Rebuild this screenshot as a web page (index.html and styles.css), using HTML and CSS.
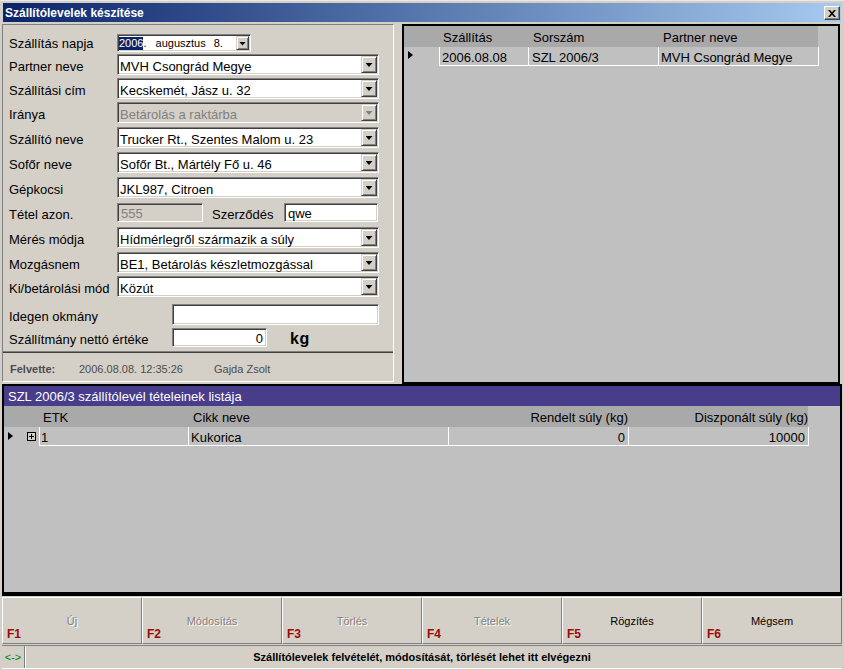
FILE: index.html
```html
<!DOCTYPE html>
<html>
<head>
<meta charset="utf-8">
<title>Szállítólevelek készítése</title>
<link rel="stylesheet" href="styles.css">
</head>
<body>
<div class="win">
  <div class="title">
    <span class="title-text">Szállítólevelek készítése</span>
    <div class="close"><svg width="8" height="7" viewBox="0 0 8 7"><path d="M0 0h2l2 2.2L6 0h2L5 3.5 8 7H6L4 4.8 2 7H0l3-3.5z" fill="#000"/></svg></div>
  </div>

  <div class="main">
    <div class="left">
      <div class="row mt9 h18">
        <div class="lbl first">Szállítás napja</div>
        <div class="datebox">
          <div class="dtext"><span class="dsel">2006</span><span>.</span><span class="dmonth">augusztus</span><span class="dday">8.</span></div>
          <div class="dbtn"><span class="arrow"></span></div>
        </div>
      </div>
      <div class="row mt2">
        <div class="lbl">Partner neve</div>
        <div class="combo"><div class="ctext">MVH Csongrád Megye</div><div class="cbtn"><span class="arrow"></span></div></div>
      </div>
      <div class="row mt3">
        <div class="lbl">Szállítási cím</div>
        <div class="combo"><div class="ctext">Kecskemét, Jász u. 32</div><div class="cbtn"><span class="arrow"></span></div></div>
      </div>
      <div class="row mt3">
        <div class="lbl">Iránya</div>
        <div class="combo disabled"><div class="ctext">Betárolás a raktárba</div><div class="cbtn"><span class="arrow"></span></div></div>
      </div>
      <div class="row mt4">
        <div class="lbl">Szállító neve</div>
        <div class="combo"><div class="ctext">Trucker Rt., Szentes Malom u. 23</div><div class="cbtn"><span class="arrow"></span></div></div>
      </div>
      <div class="row mt4">
        <div class="lbl">Sofőr neve</div>
        <div class="combo"><div class="ctext">Sofőr Bt., Mártély Fő u. 46</div><div class="cbtn"><span class="arrow"></span></div></div>
      </div>
      <div class="row mt4">
        <div class="lbl">Gépkocsi</div>
        <div class="combo"><div class="ctext">JKL987, Citroen</div><div class="cbtn"><span class="arrow"></span></div></div>
      </div>
      <div class="row mt5 h19">
        <div class="lbl">Tétel azon.</div>
        <div class="edit disabled w86">555</div>
        <div class="lbl2">Szerződés</div>
        <div class="edit w94">qwe</div>
      </div>
      <div class="row mt5">
        <div class="lbl">Mérés módja</div>
        <div class="combo"><div class="ctext">Hídmérlegről származik a súly</div><div class="cbtn"><span class="arrow"></span></div></div>
      </div>
      <div class="row mt4">
        <div class="lbl">Mozgásnem</div>
        <div class="combo"><div class="ctext">BE1, Betárolás készletmozgással</div><div class="cbtn"><span class="arrow"></span></div></div>
      </div>
      <div class="row mt3">
        <div class="lbl">Ki/betárolási mód</div>
        <div class="combo"><div class="ctext">Közút</div><div class="cbtn"><span class="arrow"></span></div></div>
      </div>
      <div class="row mt7">
        <div class="lbl wide">Idegen okmány</div>
        <div class="edit w207"></div>
      </div>
      <div class="row mt3 h19">
        <div class="lbl wide">Szállítmány nettó értéke</div>
        <div class="edit w95 num">0</div>
        <div class="unit">kg</div>
      </div>
      <div class="sep"></div>
      <div class="felv">
        <span class="fl">Felvette:</span>
        <span class="fd">2006.08.08. 12:35:26</span>
        <span class="fu">Gajda Zsolt</span>
      </div>
    </div>

    <div class="right">
      <div class="ghead">
        <div class="gi"></div>
        <div class="hc r1">Szállítás</div>
        <div class="hc r2">Sorszám</div>
        <div class="hc r3">Partner neve</div>
      </div>
      <div class="grow">
        <div class="gi"><span class="tri"></span></div>
        <div class="dc r1">2006.08.08</div>
        <div class="dc r2">SZL 2006/3</div>
        <div class="dc r3 last">MVH Csongrád Megye</div>
      </div>
    </div>
  </div>

  <div class="lower">
    <div class="caption">SZL 2006/3 szállítólevél tételeinek listája</div>
    <div class="ghead lh">
      <div class="gi"></div>
      <div class="hc l1">ETK</div>
      <div class="hc l2">Cikk neve</div>
      <div class="hc l3 ra">Rendelt súly (kg)</div>
      <div class="hc l4 ra">Diszponált súly (kg)</div>
    </div>
    <div class="grow">
      <div class="gi"><span class="tri tri2"></span><span class="plus"></span></div>
      <div class="dc l1 p2">1</div>
      <div class="dc l2 p3">Kukorica</div>
      <div class="dc l3 ra">0</div>
      <div class="dc l4 ra last">10000</div>
    </div>
  </div>

  <div class="buttons">
    <div class="btn off"><div class="bt">Új</div><div class="fk">F1</div></div>
    <div class="btn off"><div class="bt">Módosítás</div><div class="fk">F2</div></div>
    <div class="btn off"><div class="bt">Törlés</div><div class="fk">F3</div></div>
    <div class="btn off"><div class="bt">Tételek</div><div class="fk">F4</div></div>
    <div class="btn"><div class="bt">Rögzítés</div><div class="fk">F5</div></div>
    <div class="btn"><div class="bt">Mégsem</div><div class="fk">F6</div></div>
  </div>

  <div class="status">
    <div class="sico">&lt;-&gt;</div>
    <div class="stxt">Szállítólevelek felvételét, módosítását, törlését lehet itt elvégezni</div>
  </div>
</div>
</body>
</html>
```

FILE: styles.css
```css
* { box-sizing: border-box; }
html, body { margin: 0; padding: 0; }
body {
  width: 844px;
  height: 670px;
  overflow: hidden;
  background: #d4d0c8;
  font-family: "Liberation Sans", Arial, sans-serif;
  font-size: 13px;
  color: #000;
}
.win {
  width: 844px;
  height: 670px;
  padding-top: 3px;
  display: flex;
  flex-direction: column;
  border-top: 1px solid #ece9e2;
}

/* title bar */
.title {
  margin: -1px 3px 0 3px;
  height: 19px;
  background: linear-gradient(to right, #0a246a, #a6caf0);
  display: flex;
  align-items: center;
  justify-content: space-between;
  padding-left: 2px;
  padding-right: 1px;
  color: #fff;
  font-weight: bold;
  font-size: 12px;
}
.close {
  width: 16px;
  height: 14px;
  margin-top: 1px;
  background: #d4d0c8;
  border: 1px solid;
  border-color: #fff #404040 #404040 #fff;
  box-shadow: inset -1px -1px #808080;
  display: flex;
  align-items: center;
  justify-content: center;
}

/* main area */
.main {
  display: flex;
  margin-top: 2px;
  height: 360px;
}
.left {
  margin-left: 2px;
  width: 392px;
  height: 358px;
  border: 1px solid;
  border-color: #808080 #fff #fff #808080;
  display: flex;
  flex-direction: column;
}
.row {
  display: flex;
  align-items: center;
  height: 21px;
  flex: none;
}
.h18 { height: 18px; }
.h19 { height: 19px; }
.mt2 { margin-top: 2px; }
.mt3 { margin-top: 3px; }
.mt4 { margin-top: 4px; }
.mt5 { margin-top: 5px; }
.mt7 { margin-top: 7px; }
.mt9 { margin-top: 9px; }

.lbl {
  width: 114px;
  padding-left: 6px;
  padding-top: 4px;
  white-space: nowrap;
  flex: none;
}
.lbl.first { padding-top: 0; }
.lbl.wide { width: 169px; }
.lbl2 {
  margin-left: 9px;
  width: 72px;
  padding-top: 3px;
  white-space: nowrap;
}
.unit {
  margin-left: 23px;
  padding-top: 2px;
  font-weight: bold;
  font-size: 16px;
  letter-spacing: 0.5px;
}

/* sunken boxes */
.combo, .edit, .datebox {
  height: 100%;
  border: 1px solid;
  border-color: #808080 #fff #fff #808080;
  box-shadow: inset 1px 1px #404040, inset -1px -1px #d4d0c8;
  padding: 1px;
  background: #fff;
  flex: none;
}
.combo {
  width: 262px;
  display: flex;
}
.ctext {
  flex: 1;
  padding-left: 1px;
  padding-top: 2px;
  line-height: 17px;
  white-space: nowrap;
}
.cbtn, .dbtn {
  width: 16px;
  height: 100%;
  background: #d4d0c8;
  border: 1px solid;
  border-color: #d4d0c8 #404040 #404040 #d4d0c8;
  box-shadow: inset 1px 1px #fff, inset -1px -1px #808080;
  display: flex;
  align-items: center;
  justify-content: center;
}
.arrow {
  display: block;
  width: 7px;
  height: 4px;
  background: #000;
  clip-path: polygon(0 0, 7px 0, 3.5px 4px);
  margin-top: 1px;
}
.combo.disabled { background: #d4d0c8; }
.combo.disabled .ctext { color: #808080; }
.combo.disabled .arrow { background: #808080; }

.edit {
  padding: 2px 3px 0;
  line-height: 15px;
}
.edit.disabled { background: #d4d0c8; color: #808080; }
.w86 { width: 86px; }
.w94 { width: 94px; }
.w207 { width: 207px; }
.w95 { width: 95px; }
.num { text-align: right; }

.datebox {
  width: 134px;
  display: flex;
  font-size: 11px;
}
.dtext {
  flex: 1;
  display: flex;
  align-items: center;
  white-space: nowrap;
}
.dsel {
  background: #0a246a;
  color: #fff;
  line-height: 13px;
}
.dmonth { margin-left: 9px; }
.dday { margin-left: 8px; }
.dbtn { width: 13px; }

.sep {
  margin-top: 4px;
  height: 2px;
  border-top: 1px solid #808080;
  border-bottom: 1px solid #404040;
  flex: none;
}
.felv {
  flex: 1;
  display: flex;
  align-items: center;
  font-size: 11px;
  color: #4c4c4c;
  padding-top: 3px;
}
.fl { margin-left: 7px; font-weight: bold; width: 69px; }
.fd { width: 135px; }

/* right grid */
.right {
  margin-left: 8px;
  width: 438px;
  height: 360px;
  border: 2px solid #000;
  background: #c0c0c0;
}
.ghead {
  display: flex;
  height: 21px;
  background: #a9a9a9;
  width: 414px;
  align-items: center;
}
.grow {
  display: flex;
  height: 19px;
}
.gi {
  width: 35px;
  flex: none;
  position: relative;
  height: 100%;
}
.hc {
  padding-left: 4px;
  padding-top: 2px;
  white-space: nowrap;
  flex: none;
}
.dc {
  flex: none;
  height: 19px;
  border-left: 1px solid #fff;
  border-bottom: 1px solid #fff;
  padding-left: 2px;
  padding-top: 3px;
  line-height: 15px;
  white-space: nowrap;
}
.dc.last { border-right: 1px solid #fff; }
.r1 { width: 89px; }
.r2 { width: 130px; }
.r3 { width: 160px; }
.hc.r2 { padding-left: 5px; }
.hc.r3 { padding-left: 5px; }
.dc.r2 { padding-left: 3px; }
.dc.r3 { width: 161px; }
.tri {
  position: absolute;
  left: 4px;
  top: 4px;
  width: 0;
  height: 0;
  border-left: 5px solid #000;
  border-top: 4.5px solid transparent;
  border-bottom: 4.5px solid transparent;
}

/* lower panel */
.lower {
  margin: 0 2px;
  height: 212px;
  border: 2px solid #000;
  border-bottom-width: 4px;
  background: #c0c0c0;
  flex: none;
}
.caption {
  height: 20px;
  background: #483d8b;
  color: #fff;
  padding-left: 4px;
  padding-top: 2px;
  line-height: 18px;
  white-space: nowrap;
}
.ghead.lh { width: 804px; }
.l1 { width: 149px; }
.l2 { width: 260px; }
.l3 { width: 180px; }
.l4 { width: 180px; }
.hc.l2 { padding-left: 5px; }
.ra { text-align: right; padding-left: 0; }
.hc.ra { padding-right: 0; padding-left: 0; }
.dc.ra { padding-right: 3px; }
.dc.l4 { width: 181px; }
.p2 { padding-left: 1px; }
.p3 { padding-left: 2px; }
.tri2 { left: 4px; top: 5px; }
.plus {
  position: absolute;
  left: 23px;
  top: 5px;
  width: 9px;
  height: 9px;
  border: 1px solid #000;
  background:
    linear-gradient(#000, #000) center / 5px 1px no-repeat,
    linear-gradient(#000, #000) center / 1px 5px no-repeat,
    #d4d0c8;
}

/* buttons */
.buttons {
  margin: 1px 2px 0;
  display: flex;
  height: 47px;
  flex: none;
}
.btn {
  flex: 1;
  border: 1px solid;
  border-color: #fff #808080 #808080 #fff;
  padding: 15px 4px 0;
  font-size: 11px;
}
.bt {
  height: 16px;
  line-height: 16px;
  text-align: center;
}
.btn.off .bt {
  color: #808080;
  text-shadow: 1px 1px 0 #fff;
}
.fk {
  margin-top: -1px;
  line-height: 13px;
  font-size: 12px;
  font-weight: bold;
  color: #9c0a0a;
}

/* status */
.status {
  margin: 1px 2px 0;
  height: 24px;
  display: flex;
  border-top: 1px solid #808080;
  border-bottom: 1px solid #fff;
  flex: none;
}
.sico {
  width: 23px;
  border-right: 1px solid #808080;
  color: #008000;
  font-size: 11px;
  text-align: center;
  line-height: 22px;
}
.stxt {
  flex: 1;
  border-left: 1px solid #fff;
  text-align: center;
  font-weight: bold;
  font-size: 11px;
  line-height: 22px;
  padding-right: 24px;
  white-space: nowrap;
}
```
